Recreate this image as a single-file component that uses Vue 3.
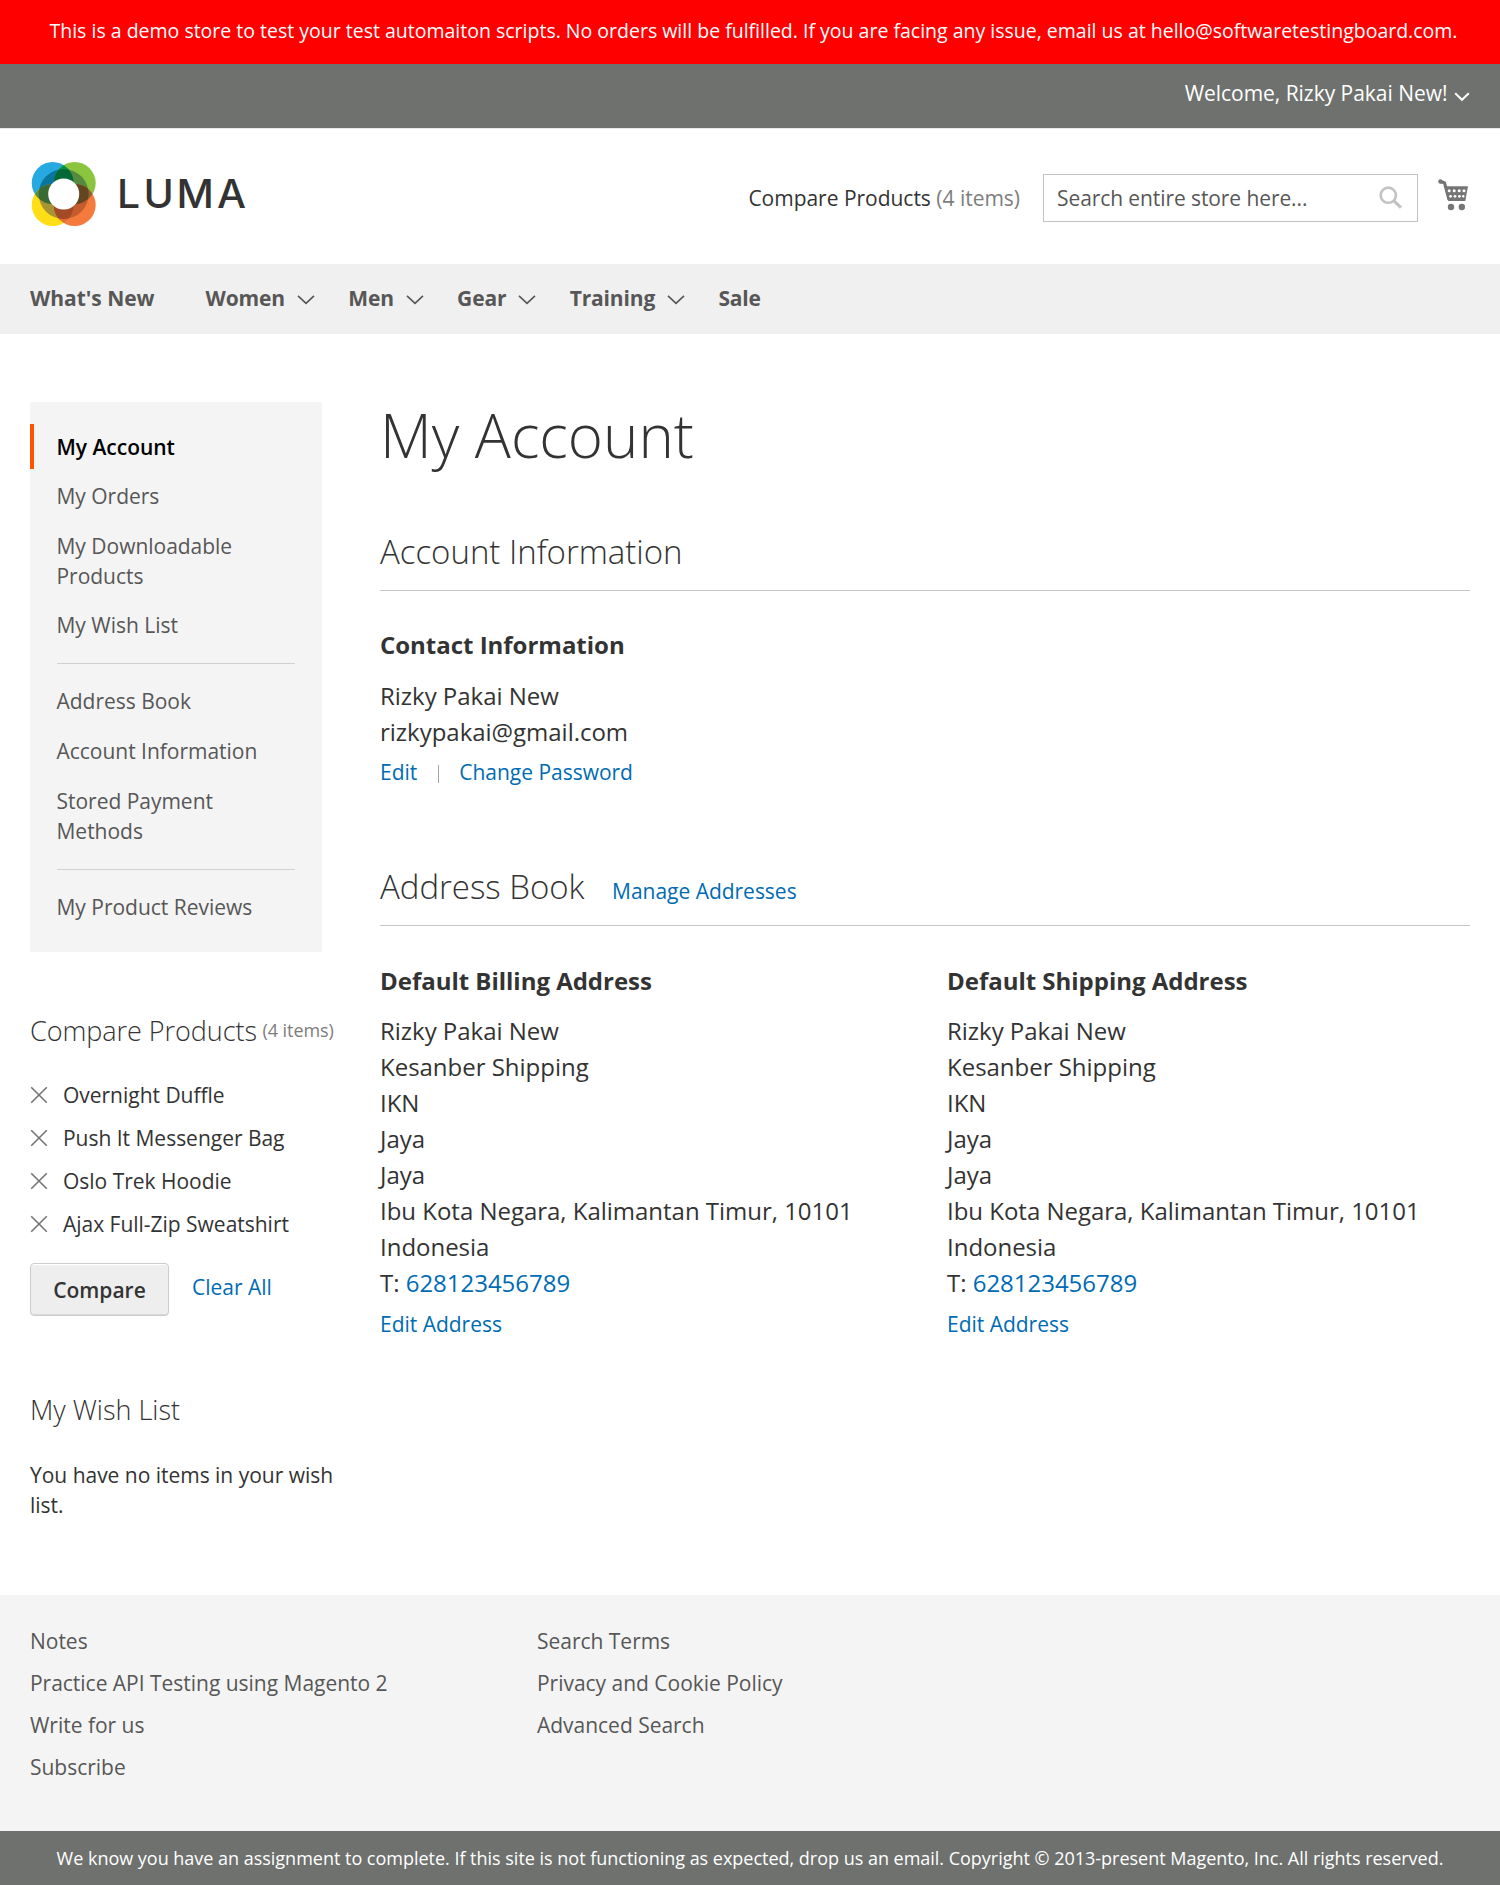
<script setup>
const topLinks = [
  { label: "What's New", menu: false, wide: true },
  { label: 'Women', menu: true },
  { label: 'Men', menu: true },
  { label: 'Gear', menu: true },
  { label: 'Training', menu: true },
  { label: 'Sale', menu: false },
]

const accountGroups = [
  ['My Account', 'My Orders', 'My Downloadable Products', 'My Wish List'],
  ['Address Book', 'Account Information', 'Stored Payment Methods'],
  ['My Product Reviews'],
]

const compared = ['Overnight Duffle', 'Push It Messenger Bag', 'Oslo Trek Hoodie', 'Ajax Full-Zip Sweatshirt']

const addressLines = [
  'Rizky Pakai New',
  'Kesanber Shipping',
  'IKN',
  'Jaya',
  'Jaya',
  'Ibu Kota Negara, Kalimantan Timur, 10101',
  'Indonesia',
]
const addresses = ['Default Billing Address', 'Default Shipping Address']

const footerColumns = [
  ['Notes', 'Practice API Testing using Magento 2', 'Write for us', 'Subscribe'],
  ['Search Terms', 'Privacy and Cookie Policy', 'Advanced Search'],
]
</script>

<template>
  <div class="page">
    <div class="notice">
      This is a demo store to test your test automaiton scripts. No orders will be fulfilled. If you are facing any issue, email us at hello@softwaretestingboard.com.
    </div>

    <header>
      <div class="panel">
        <span class="welcome">Welcome, Rizky Pakai New!</span>
        <svg class="welcome-arrow" width="16" height="10" viewBox="0 0 16 10">
          <path d="M1.2 1.3 L8 7.8 L14.8 1.3" fill="none" stroke="#fff" stroke-width="2" />
        </svg>
      </div>

      <div class="header-main">
        <a class="logo">
          <svg width="222" height="66" viewBox="0 0 222 66">
            <defs>
              <clipPath id="blue"><circle cx="22" cy="22" r="21" /></clipPath>
              <clipPath id="green"><circle cx="44" cy="22" r="21" /></clipPath>
              <clipPath id="yellow"><circle cx="22" cy="44" r="21" /></clipPath>
              <clipPath id="orange"><circle cx="44" cy="44" r="21" /></clipPath>
            </defs>
            <g transform="translate(0.7 0)">
              <circle cx="22" cy="22" r="21" fill="#26a9e0" />
              <circle cx="44" cy="22" r="21" fill="#8bc53f" />
              <circle cx="22" cy="44" r="21" fill="#ffde17" />
              <circle cx="44" cy="44" r="21" fill="#f47b3d" />
              <circle cx="44" cy="22" r="21" fill="#009344" clip-path="url(#blue)" />
              <circle cx="22" cy="44" r="21" fill="#5b8c3c" clip-path="url(#blue)" />
              <circle cx="44" cy="44" r="21" fill="#8d6133" clip-path="url(#green)" />
              <circle cx="44" cy="44" r="21" fill="#e06f38" clip-path="url(#yellow)" />
              <circle cx="33" cy="33" r="25" fill="#0a769d" clip-path="url(#blue)" />
              <circle cx="33" cy="33" r="25" fill="#568a3e" clip-path="url(#green)" />
              <circle cx="33" cy="33" r="25" fill="#a99435" clip-path="url(#yellow)" />
              <circle cx="33" cy="33" r="25" fill="#c45c2e" clip-path="url(#orange)" />
              <g clip-path="url(#blue)">
                <g clip-path="url(#green)"><circle cx="33" cy="33" r="25" fill="#006935" /></g>
                <g clip-path="url(#yellow)"><circle cx="33" cy="33" r="25" fill="#396a33" /></g>
              </g>
              <g clip-path="url(#orange)">
                <g clip-path="url(#green)"><circle cx="33" cy="33" r="25" fill="#63451f" /></g>
                <g clip-path="url(#yellow)"><circle cx="33" cy="33" r="25" fill="#a34a24" /></g>
              </g>
              <circle cx="33" cy="33" r="15.5" fill="#fff" />
            </g>
            <text class="wordmark" transform="scale(1.05 1)" x="82.8 108.2 139.6 178.1" y="46.8">LUMA</text>
          </svg>
        </a>
        <span class="compare-link">Compare Products <span class="muted">(4 items)</span></span>
        <div class="search">
          <span>Search entire store here...</span>
          <svg width="24" height="24" viewBox="0 0 24 24">
            <circle cx="9.3" cy="9.2" r="7.6" fill="none" stroke="#c2c2c2" stroke-width="2.6" />
            <path d="M14.6 14.6 L22 21.6" stroke="#c2c2c2" stroke-width="3.2" />
          </svg>
        </div>
        <svg class="cart" width="30" height="32" viewBox="0 0 30 32">
          <path d="M2.5 2.6 L6.5 3.8 L11 20.5" fill="none" stroke="#757575" stroke-width="3.2" stroke-linejoin="round" />
          <circle cx="2.4" cy="2.5" r="2.2" fill="#757575" />
          <path d="M6.5 7.2 H30 L27.3 22 H10.2 Z" fill="#757575" />
          <g fill="#fff">
            <circle cx="11.2" cy="11.8" r="1.5" /><circle cx="16.2" cy="11.8" r="1.5" />
            <circle cx="21.2" cy="11.8" r="1.5" /><circle cx="26" cy="11.8" r="1.5" />
            <circle cx="12.6" cy="17.3" r="1.4" /><circle cx="17" cy="17.3" r="1.4" />
            <circle cx="21.4" cy="17.3" r="1.4" /><circle cx="25.2" cy="17.3" r="1.2" />
          </g>
          <circle cx="13" cy="28" r="3.2" fill="#757575" />
          <circle cx="23.8" cy="28" r="3.2" fill="#757575" />
        </svg>
      </div>
    </header>

    <nav class="main-nav">
      <a v-for="link in topLinks" :key="link.label" :class="{ wide: link.wide }">
        {{ link.label }}
        <svg v-if="link.menu" width="18" height="10" viewBox="0 0 18 10">
          <path d="M1 0.8 L9 8.3 L17 0.8" fill="none" stroke="#575757" stroke-width="1.7" />
        </svg>
      </a>
    </nav>

    <div class="columns">
      <aside>
        <div class="account-nav">
          <template v-for="(group, g) in accountGroups" :key="g">
            <hr v-if="g > 0" />
            <ul>
              <li v-for="item in group" :key="item" :class="{ current: item === 'My Account' }">{{ item }}</li>
            </ul>
          </template>
        </div>

        <section class="compare">
          <h3>Compare Products <small>(4 items)</small></h3>
          <ul>
            <li v-for="item in compared" :key="item">
              <svg width="18" height="18" viewBox="0 0 18 18">
                <path d="M1.2 1.2 L16.8 16.8 M16.8 1.2 L1.2 16.8" stroke="#757575" stroke-width="1.6" />
              </svg>
              {{ item }}
            </li>
          </ul>
          <div class="compare-actions">
            <button>Compare</button>
            <a>Clear All</a>
          </div>
        </section>

        <section class="wishlist">
          <h3>My Wish List</h3>
          <p>You have no items in your wish list.</p>
        </section>
      </aside>

      <main>
        <h1>My Account</h1>

        <section class="info">
          <div class="block-title"><h2>Account Information</h2></div>
          <h4>Contact Information</h4>
          <p>Rizky Pakai New<br />rizkypakai@gmail.com</p>
          <div class="actions"><a>Edit</a><i></i><a>Change Password</a></div>
        </section>

        <section>
          <div class="block-title">
            <h2>Address Book</h2>
            <a>Manage Addresses</a>
          </div>
          <div class="addresses">
            <div v-for="title in addresses" :key="title">
              <h4>{{ title }}</h4>
              <p>
                <template v-for="(line, i) in addressLines" :key="i">{{ line }}<br /></template>
                T: <a>628123456789</a>
              </p>
              <div class="actions"><a>Edit Address</a></div>
            </div>
          </div>
        </section>
      </main>
    </div>

    <footer>
      <ul v-for="(column, c) in footerColumns" :key="c">
        <li v-for="item in column" :key="item">{{ item }}</li>
      </ul>
    </footer>
    <div class="copyright">
      <span>We know you have an assignment to complete. If this site is not functioning as expected, drop us an email. Copyright © 2013-present Magento, Inc. All rights reserved.</span>
    </div>
  </div>
</template>

<style>
body {
  margin: 0;
  background: #fff;
}
</style>

<style scoped>
.page {
  width: 1500px;
  height: 1885px;
  overflow: hidden;
  font-family: 'Open Sans', sans-serif;
  font-size: 21px;
  line-height: 30px;
  letter-spacing: -0.02px;
  color: #333;
}
h1, h2, h3, h4, p, ul {
  margin: 0;
  padding: 0;
}
ul {
  list-style: none;
}
a {
  color: #006bb4;
}
svg {
  display: block;
  flex: none;
}
.notice {
  box-sizing: border-box;
  height: 64px;
  padding: 16px 0 0 7px;
  background: #f00;
  color: #fff;
  font-size: 19.5px;
  line-height: 29px;
  letter-spacing: 0;
  text-align: center;
  white-space: nowrap;
}
.panel {
  box-sizing: border-box;
  display: flex;
  justify-content: flex-end;
  height: 64px;
  padding: 13.5px 30px 0 0;
  background: #6e716e;
  color: #fff;
  letter-spacing: -0.03px;
}
.welcome-arrow {
  margin: 14px 0 0 6.5px;
}
.header-main {
  box-sizing: border-box;
  display: flex;
  height: 136px;
  padding: 0 30px;
  border-top: 1px solid #e8e8e8;
}
.logo {
  margin: 32px auto 0 0;
}
.wordmark {
  font-family: Inter, sans-serif;
  font-size: 39px;
  font-weight: 500;
  letter-spacing: 0;
  fill: #333;
}
.compare-link {
  margin-top: 54px;
}
.muted {
  color: #7d7d7d;
}
.search {
  box-sizing: border-box;
  display: flex;
  justify-content: space-between;
  width: 375px;
  height: 48px;
  margin: 45px 0 0 23px;
  padding: 8px 14px 0 13px;
  border: 1px solid #c2c2c2;
  color: #575757;
  letter-spacing: -0.09px;
}
.search svg {
  margin-top: 3px;
}
.cart {
  margin: 50px 2px 0 20px;
}
.main-nav {
  box-sizing: border-box;
  display: flex;
  height: 70px;
  padding: 19px 30px 0;
  background: #f0f0f0;
  color: #575757;
  font-weight: 700;
  letter-spacing: -0.15px;
}
.main-nav a {
  display: flex;
  color: inherit;
  margin-right: 33.3px;
}
.main-nav a.wide {
  margin-right: 51px;
  letter-spacing: -0.03px;
}
.main-nav svg {
  margin: 12px 0 0 12px;
}
.columns {
  display: flex;
  padding: 0 30px;
  height: 1261px;
}
aside {
  width: 310px;
  margin-right: 40px;
  padding-top: 68px;
}
.account-nav {
  box-sizing: border-box;
  width: 292px;
  height: 550px;
  padding: 22px 0;
  background: #f4f4f4;
  color: #575757;
}
.account-nav li {
  padding: 7.5px 60px 7.5px 26.5px;
}
.account-nav li + li {
  margin-top: 4.6px;
}
.account-nav .current {
  padding-left: 22.5px;
  border-left: 4px solid #ff5501;
  color: #000;
  font-weight: 600;
}
.account-nav hr {
  height: 1px;
  margin: 15.5px 27px 14.7px;
  border: 0;
  background: #d1d1d1;
}
h3 {
  font-size: 27px;
  font-weight: 300;
  letter-spacing: -0.05px;
  white-space: nowrap;
}
h3 small {
  display: inline-block;
  margin-left: -1.5px;
  font-size: 18px;
  font-weight: 400;
  line-height: 20px;
  color: #7d7d7d;
  vertical-align: 4px;
}
.compare {
  padding-top: 64px;
}
.compare h3 {
  height: 30px;
  margin-bottom: 33.5px;
}
.compare li {
  display: flex;
  gap: 15px;
  margin-bottom: 13px;
}
.compare li svg {
  margin-top: 6px;
}
.compare-actions {
  display: flex;
  gap: 23px;
  margin-top: 24px;
}
.compare-actions a {
  margin-top: 9px;
}
button {
  box-sizing: border-box;
  width: 139px;
  height: 53px;
  padding: 2px 0 0;
  border: 1px solid #ccc;
  border-radius: 4px;
  background: #eee;
  box-shadow: inset 0 1px 0 #fff, inset 0 -1px 0 #dadada;
  color: #333;
  font: 600 21px 'Open Sans', sans-serif;
}
.wishlist {
  padding-top: 79px;
}
.wishlist h3 {
  margin-bottom: 35.2px;
  letter-spacing: 0;
}
main {
  flex: 1;
  padding-top: 68px;
}
h1 {
  margin-bottom: 66px;
  font-size: 60px;
  font-weight: 300;
  line-height: 66px;
}
.block-title {
  display: flex;
  align-items: baseline;
  height: 56px;
  margin-bottom: 36px;
  border-bottom: 1px solid #c6c6c6;
}
.block-title a {
  margin-left: 27.5px;
}
h2 {
  font-size: 33px;
  font-weight: 300;
  line-height: 36px;
}
h4 {
  margin-bottom: 14px;
  font-size: 24px;
  font-weight: 700;
  line-height: 36px;
}
main p {
  font-size: 24px;
  line-height: 36px;
}
.info {
  margin-bottom: 82.5px;
}
.info p {
  padding-top: 0.5px;
}
.actions {
  display: flex;
  margin-top: 7px;
}
.addresses .actions {
  margin-top: 8.3px;
}
.actions i {
  width: 1px;
  height: 18px;
  margin: 8px 20px 0 21px;
  background: #a6a6a6;
}
.addresses {
  display: grid;
  grid-template-columns: 567px 1fr;
  padding-top: 0.5px;
}
footer {
  box-sizing: border-box;
  display: grid;
  grid-template-columns: 507px 1fr;
  height: 236px;
  padding: 30.5px 30px 0;
  background: #f4f4f4;
  color: #575757;
}
footer li {
  margin-bottom: 12px;
}
.copyright {
  box-sizing: border-box;
  height: 54px;
  padding-top: 15px;
  background: #6e716e;
  color: #fff;
  font-size: 18px;
  line-height: 24px;
  letter-spacing: -0.015px;
  text-align: center;
  white-space: nowrap;
}
</style>
